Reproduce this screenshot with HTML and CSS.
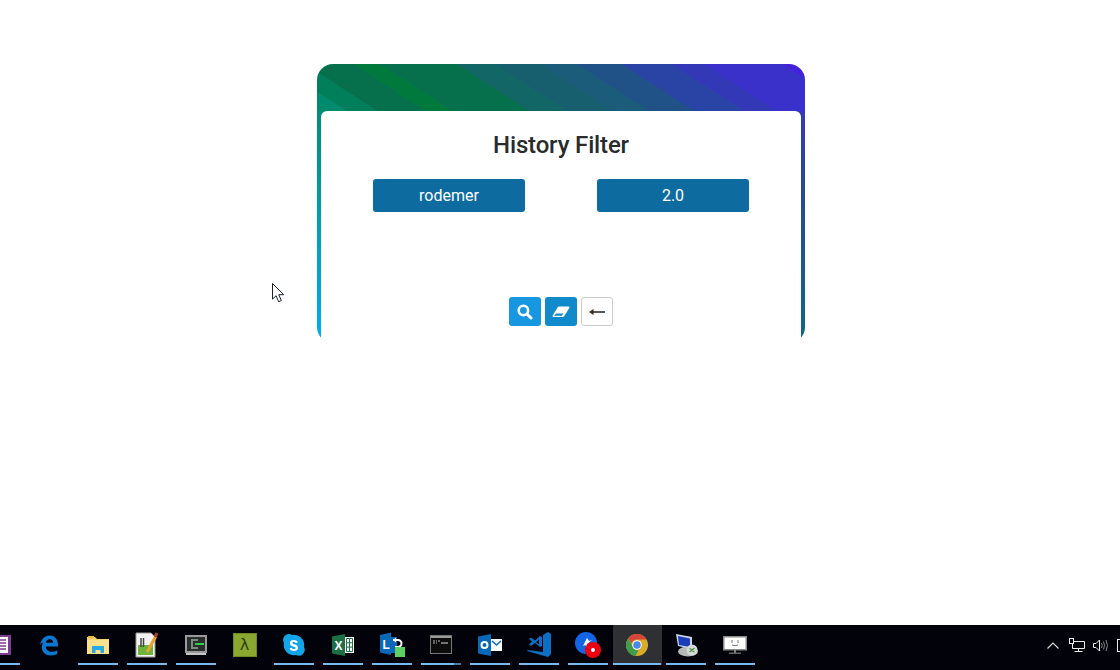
FILE: index.html
```html
<!DOCTYPE html>
<html lang="en">
<head>
  <meta charset="UTF-8" />
  <title>History Filter</title>
  <link rel="stylesheet" href="styles.css">
</head>
<body>
  <main class="page">
    <div class="card">
      <div class="card-body">
        <h2>History Filter</h2>
        <div class="filters">
          <button class="chip" type="button">rodemer</button>
          <button class="chip" type="button">2.0</button>
        </div>
        <div class="actions">
          <button class="btn btn-search" type="button" aria-label="Search">
            <svg width="16" height="16" viewBox="0 0 16 16"><circle cx="6.4" cy="6.4" r="4.7" fill="none" stroke="#fff" stroke-width="2.6"/><path d="M10.2 10.2l3.8 3.8" stroke="#fff" stroke-width="3" stroke-linecap="round"/></svg>
          </button>
          <button class="btn btn-clear" type="button" aria-label="Clear">
            <svg width="18" height="12" viewBox="0 0 18 12"><path fill-rule="evenodd" d="M7 .5H16.500Q18 .5 17.300 2L12.300 10Q11.500 11 10.500 11H1.500Q0 11 .7 9.500L5.500 1.500Q6 .5 7 .5zM3.900 7.400L2.300 9.800H9.900L11.400 7.400z" fill="#fff"/></svg>
          </button>
          <button class="btn btn-back" type="button" aria-label="Back">
            <svg width="16" height="8" viewBox="0 0 16 8"><path d="M4 4h12" stroke="#2b2b3a" stroke-width="1.6"/><path d="M0 4l4.500-3v6z" fill="#3a2a10"/></svg>
          </button>
        </div>
      </div>
    </div>
    <svg class="cursor" width="14" height="20" viewBox="0 0 14 20"><path d="M.5.5v15.600l3.600-3.400 2.500 6 2.700-1.100-2.500-5.900h5z" fill="#fff" stroke="#1a2230" stroke-width="1"/></svg>
  </main>

  <footer class="taskbar">
    <div class="apps">
      <div class="app on">
        <svg width="24" height="24" viewBox="0 0 24 24"><rect x="1" y="2" width="22" height="20" fill="#7d3c8c"/><rect x="5" y="4" width="15" height="16" fill="#fff"/><path d="M7 7h11M7 10h11M7 13h11M7 16h11" stroke="#7d3c8c" stroke-width="1.400"/></svg>
      </div>
      <div class="app">
        <svg width="22" height="22" viewBox="0 0 24 24"><path d="M2.200 12.500C3 6 7.300 1.500 12.800 1.500 18.800 1.500 22 6 22 13.500H8.500c.2 4 3.300 5.800 6.500 5.800 2.400 0 4.500-.7 6-1.700v4.300c-1.800 1-4 1.600-6.800 1.600-6 0-10-3.800-10-9 0-1.700.4-3.200 1-4.400C4.600 8.500 3.200 10.200 2.200 12.500zM8.600 9.600h8c-.1-2.500-1.600-3.900-3.700-3.900-2.300 0-3.900 1.500-4.300 3.900z" fill="#0a78d0"/></svg>
      </div>
      <div class="app on">
        <svg width="22" height="20" viewBox="0 0 22 20"><path d="M0 2h8l2 2h12v15H0z" fill="#f4d26f"/><path d="M0 5h22v14H0z" fill="#fde08c"/><path d="M1 1h6v2H1z" fill="#e5b53e"/><path d="M5 11h12v7h-3.500v-3h-5v3H5z" fill="#27a9e6"/></svg>
      </div>
      <div class="app on">
        <svg width="24" height="26" viewBox="0 0 24 26"><path d="M1 1h15l4 4v20H1z" fill="#f2f2f2" stroke="#9a9a9a"/><rect x="3" y="13" width="15" height="10" fill="#6eb43c"/><path d="M6 6v9M8.500 6v9" stroke="#444" stroke-width="1.500"/><path d="M12 20L21 4" stroke="#e8a52c" stroke-width="3"/><path d="M20 5l2-4" stroke="#a5402c" stroke-width="3"/></svg>
      </div>
      <div class="app on">
        <svg width="22" height="20" viewBox="0 0 22 20"><rect width="22" height="18" fill="#9a9a9a"/><rect x="2" y="2" width="18" height="14" fill="#2a2d2d"/><path d="M6 4h7v2H8v6h5v2H6z" fill="#7c8a80"/><rect x="10" y="8" width="9" height="2" fill="#2ed045"/><rect x="1" y="18" width="20" height="2" fill="#c4c4c4"/></svg>
      </div>
      <div class="app">
        <div class="lambda">λ</div>
      </div>
      <div class="app on">
        <svg width="22" height="22" viewBox="0 0 22 22"><path d="M6 0a6 6 0 0 1 3 .9 10.200 10.200 0 0 1 12 12 6 6 0 0 1-8.100 8.100A10.200 10.200 0 0 1 .9 9 6 6 0 0 1 6 0z" fill="#12a5e8"/><path d="M15 13.800c0 2.200-1.800 3.300-4.100 3.300-2.500 0-4-1.100-4.300-2.800l2.200-.5c.2.900 1 1.300 2.100 1.300 1 0 1.700-.4 1.700-1.100 0-1.900-5.700-.9-5.700-4.700 0-2 1.700-3.200 4-3.200 2.200 0 3.600 1 4 2.500l-2.200.5c-.2-.7-.9-1.100-1.800-1.100-.9 0-1.500.4-1.500 1 0 1.800 5.600.8 5.600 4.800z" fill="#fff"/></svg>
      </div>
      <div class="app on">
        <svg width="22" height="22" viewBox="0 0 22 22"><path d="M0 2.500L13 0v22L0 19.500z" fill="#1d7044"/><path d="M13 3h9v16h-9z" fill="#fff"/><path d="M14.500 4.500h6v13h-6zM14.500 8.800h6M14.500 13.100h6M17.500 4.500v13" fill="none" stroke="#1d7044"/><text x="2.500" y="15.500" class="tile-letter">X</text></svg>
      </div>
      <div class="app on">
        <svg width="26" height="26" viewBox="0 0 26 26"><path d="M1 3l11-2.500V23L1 20.500z" fill="#0a68b8"/><path d="M12 5h6v16h-6z" fill="#0a68b8"/><text x="3.500" y="16.500" class="tile-letter">L</text><path d="M14 8h5a3.500 3.500 0 0 1 0 7h-3" fill="none" stroke="#fff" stroke-width="2"/><path d="M17 5.500v5l-3-2.500z" fill="#fff"/><rect x="16" y="15" width="10" height="10" fill="#5cd060"/></svg>
      </div>
      <div class="app on half">
        <svg width="22" height="19" viewBox="0 0 22 19"><rect x=".5" y=".5" width="21" height="18" fill="#0c0c0c" stroke="#777"/><rect x="1" y="1" width="20" height="2" fill="#999"/><path d="M3 6h2M6 6h1M8 6h2M3 8h2M6 8h1" stroke="#bbb"/><path d="M11 8h7" stroke="#ddd"/></svg>
      </div>
      <div class="app on">
        <svg width="24" height="22" viewBox="0 0 24 22"><path d="M0 2.500L13 0v22L0 19.500z" fill="#0a68b8"/><circle cx="6.500" cy="11" r="3" fill="none" stroke="#fff" stroke-width="2"/><rect x="13" y="5" width="11" height="12" fill="#fff"/><path d="M14 7l4.500 4L23 7" fill="none" stroke="#0a68b8" stroke-width="1.500"/></svg>
      </div>
      <div class="app on">
        <svg width="24" height="25" viewBox="0 0 24 25"><path d="M16 3l5-3 3 2v20l-3 3L0 19l1-1 15 2z" fill="#0a70c4"/><path fill-rule="evenodd" d="M2 7l2-1.500 4 3 5-4.500 2 1v9l-2 1-5-4-4 3-2-1.500 3-3zM12 7.500L9 10.200l3 2.300z" fill="#0a70c4"/></svg>
      </div>
      <div class="app on">
        <svg width="26" height="26" viewBox="0 0 26 26"><circle cx="11" cy="11" r="11" fill="#1464e6"/><path d="M8 14l4-8 2 3 3-1-5 4 1 4-3-3z" fill="#fff"/><circle cx="18" cy="18" r="8" fill="#f0000f"/><circle cx="18" cy="18" r="2" fill="#fff"/></svg>
      </div>
      <div class="app on active">
        <svg width="22" height="22" viewBox="0 0 22 22"><circle cx="11" cy="11" r="11" fill="#d9a92a"/><path d="M11 0a11 11 0 0 1 9.500 5.500H11A5.500 5.500 0 0 0 5.700 9.500L2.200 4.400A11 11 0 0 1 11 0z" fill="#d6453a"/><path d="M2.200 4.400L7 12.700A5.500 5.500 0 0 0 12.500 16.300L9.300 21.900A11 11 0 0 1 2.200 4.400z" fill="#3f9c4a"/><circle cx="11" cy="11" r="4.800" fill="#fff"/><circle cx="11" cy="11" r="3.800" fill="#4a88e8"/></svg>
      </div>
      <div class="app on">
        <svg width="24" height="24" viewBox="0 0 24 24"><ellipse cx="14" cy="18.500" rx="10" ry="5" fill="#b8b8b8"/><path d="M2 1l16 3v12L4 13z" fill="#c8d4e8"/><path d="M4 3l12 2.500v8.500L5 12z" fill="#1a3cb8"/><circle cx="18" cy="17" r="5.500" fill="#d8d8d8"/><path d="M15.500 19l5-4M15.500 15.500l2 1M18.500 18l2 1" stroke="#3f8f3a" stroke-width="1.200"/></svg>
      </div>
      <div class="app on">
        <svg width="24" height="18" viewBox="0 0 24 18"><rect x=".75" y=".75" width="22.500" height="13" fill="#fff" stroke="#8a8a8a" stroke-width="1.500"/><path d="M9 4v3M15 4v3M9 9q3 1.500 6 0" fill="none" stroke="#777"/><rect x="11" y="14" width="2" height="3" fill="#888"/><rect x="6" y="16.500" width="12" height="1.500" fill="#666"/></svg>
      </div>
    </div>

    <div class="tray">
      <svg class="tray-more" width="12" height="7" viewBox="0 0 12 7"><path d="M.5 6.500L6 1l5.500 5.500" fill="none" stroke="#ddd" stroke-width="1.100"/></svg>
      <svg width="16" height="14" viewBox="0 0 16 14"><path d="M3.500 3.500h12v7h-12zM9.500 10.500v2.500M5.500 13.500h8" fill="none" stroke="#eee"/><rect x=".5" y=".5" width="4" height="5" fill="#050510" stroke="#eee"/></svg>
      <svg width="16" height="13" viewBox="0 0 16 13"><path d="M.5 4.500h2.500L6.500 1v11L3 8.500H.5z" fill="none" stroke="#eee"/><path d="M8.500 4q1.200 2.500 0 5M10.500 2.500q2 4 0 8M13 1q2.800 5.500 0 11" fill="none" stroke="#888"/></svg>
      <span class="tray-note"></span>
    </div>
  </footer>
</body>
</html>
```

FILE: styles.css
```css
* {
  box-sizing: border-box;
}

html, body {
  height: 100%;
}

body {
  margin: 0;
  display: flex;
  flex-direction: column;
  overflow: hidden;
  background-color: #fff;
  font-family: Roboto, sans-serif;
}

.page {
  flex: 1;
  position: relative;
  display: flex;
  justify-content: center;
  padding: 64px 0 0 2px;
}

.card {
  width: 488px;
  height: 279px;
  padding: 47px 4px 0;
  border-radius: 16px;
  background:
    linear-gradient(33deg,
      #008a6e 5.3%, #007f5a 5.3% 10.8%, #06704d 10.8% 19.5%,
      #007a3c 19.5% 24.1%, #06704d 24.1% 37.9%, #136666 37.9% 44.7%,
      #175f6e 44.7% 52.7%, #1a5c7a 52.7% 59.3%, #205288 59.3% 67.3%,
      #2a44a6 67.3% 76.2%, #3238b6 76.2% 82%, #3a30ca 82% 96%, #4422dc 96%) top / 100% 47px no-repeat,
    linear-gradient(#00885f, #0099a6 45%, #00aeef) left / 50% 100% no-repeat,
    linear-gradient(#3a30cf, #2a479c 45%, #0f6a7a) right / 50% 100% no-repeat;
}

.card-body {
  height: 100%;
  padding-top: 19px;
  border-radius: 6px 6px 0 0;
  background-color: #fff;
  text-align: center;
}

h2 {
  margin: 0;
  font-size: 24px;
  line-height: 30px;
  font-weight: 500;
  letter-spacing: -.15px;
  color: #292b2c;
}

.filters {
  display: flex;
  justify-content: center;
  gap: 72px;
  margin-top: 19px;
}

.chip {
  width: 152px;
  height: 33px;
  padding: 0;
  border: none;
  border-radius: 3px;
  background-color: #0e6ba0;
  color: #fff;
  font-family: Roboto, sans-serif;
  font-size: 16px;
}

.actions {
  display: flex;
  justify-content: center;
  gap: 4px;
  margin-top: 85px;
}

.btn {
  display: flex;
  align-items: center;
  justify-content: center;
  width: 32px;
  height: 29px;
  padding: 0;
  border: none;
  border-radius: 3px;
}

.btn-search {
  background-color: #1797e0;
}

.btn-clear {
  background-color: #108acb;
}

.btn-back {
  background-color: #fff;
  border: 1px solid #ccc;
}

.cursor {
  position: absolute;
  left: 272px;
  top: 283px;
}

/* barra de tarefas */
.taskbar {
  flex: none;
  display: flex;
  justify-content: space-between;
  height: 45px;
  background-color: #02020a;
}

.apps {
  display: flex;
  height: 40px;
  margin-left: -24px;
}

.app {
  position: relative;
  display: flex;
  align-items: center;
  justify-content: center;
  width: 49px;
  padding: 0 2px 1px 0;
}

.app.on::after {
  content: "";
  position: absolute;
  left: 4px;
  right: 5px;
  bottom: 0;
  height: 2px;
  background-color: #76b9ed;
}

.app.half::after {
  background: linear-gradient(to right, #76b9ed 82%, #4a7ba3 82%);
}

.app.active {
  background-color: #2e3033;
}

.app.active::after {
  left: 0;
  right: 1px;
}

.lambda {
  width: 24px;
  height: 24px;
  background-color: #8aa82f;
  border: 1px solid #6f8a22;
  color: #2d3d10;
  font-family: "DejaVu Sans", sans-serif;
  font-size: 16px;
  line-height: 22px;
  text-align: center;
}

.tile-letter {
  fill: #fff;
  font-family: "Liberation Sans", sans-serif;
  font-size: 12px;
  font-weight: 700;
}

.tray {
  display: flex;
  align-items: center;
  gap: 8px;
  height: 40px;
  margin-right: -7px;
}

.tray-more {
  margin-right: 2px;
}

.tray-note {
  width: 10px;
  height: 13px;
  border: 1px solid #eee;
}
```
